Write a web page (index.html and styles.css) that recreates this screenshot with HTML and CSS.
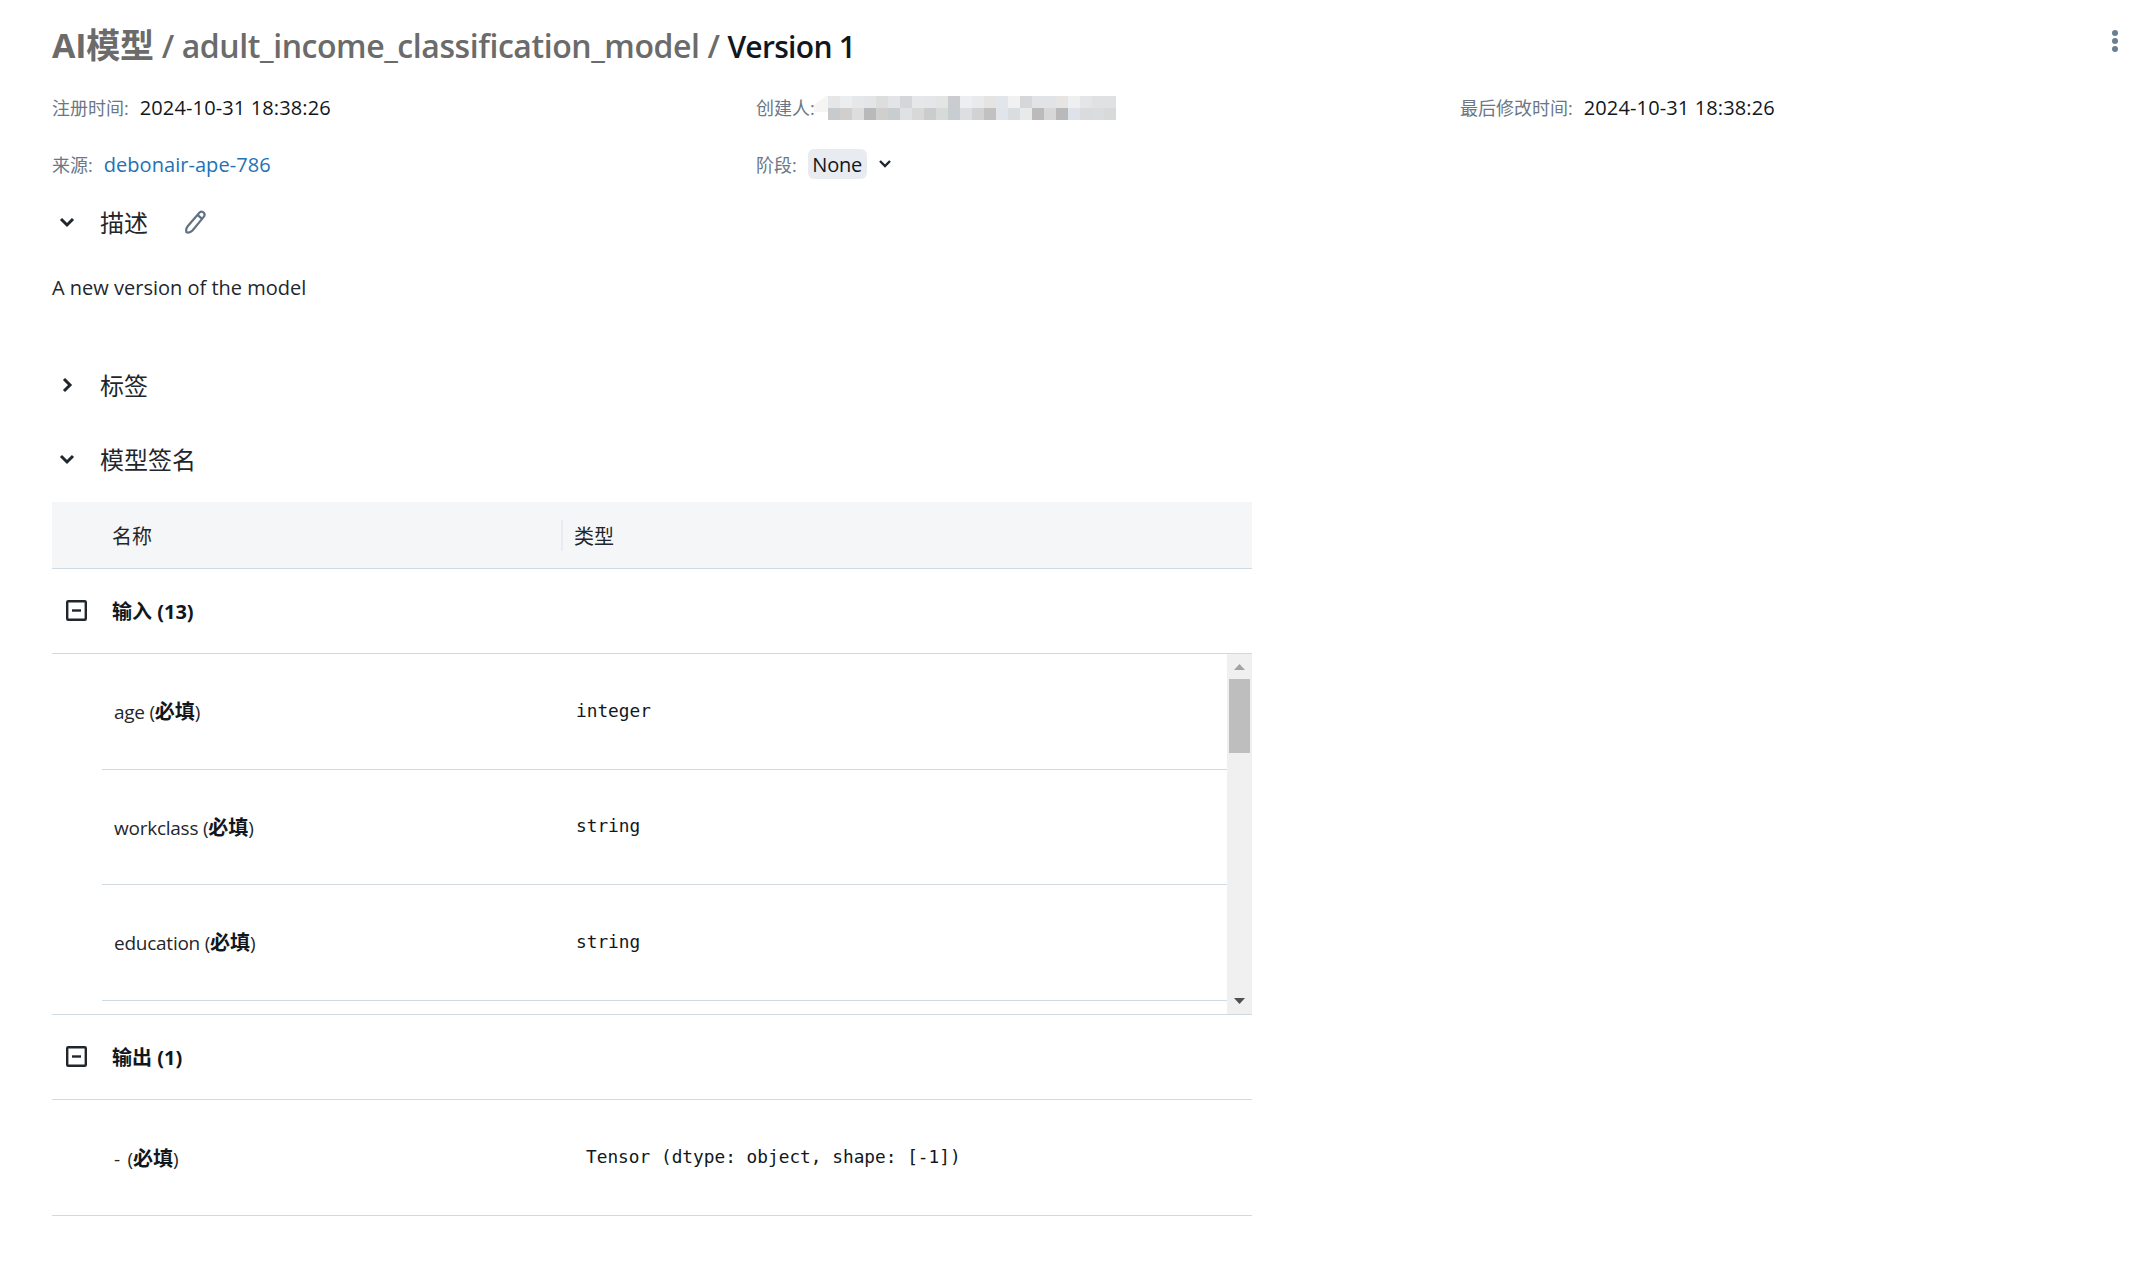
FILE: index.html
```html
<!DOCTYPE html>
<html lang="zh">
<head>
<meta charset="utf-8">
<title>Version 1</title>
<link rel="stylesheet" href="styles.css">
</head>
<body>
<main class="page">
  <header class="title-row">
    <h1 class="title"><span class="crumb crumb-root">AI模型</span><span class="crumb"> / adult_income_classification_model / </span><span class="current">Version 1</span></h1>
    <svg class="kebab" width="8" height="24" viewBox="0 0 8 24"><circle cx="4" cy="4" r="3"/><circle cx="4" cy="12" r="3"/><circle cx="4" cy="20" r="3"/></svg>
  </header>

  <section class="meta">
    <div class="meta-item"><span class="meta-label">注册时间:</span><span class="meta-value">2024-10-31 18:38:26</span></div>
    <div class="meta-item"><span class="meta-label">创建人:</span>
      <svg class="redacted" width="302" height="24" viewBox="0 0 302 24">
        <polygon points="0,16 0,9 12,0 14,0 14,16" fill="#f5f5f4"/>
        <g>
          <rect x="14" y="0" width="12" height="12" fill="#e4e6e8"/><rect x="26" y="0" width="12" height="12" fill="#ecedee"/><rect x="38" y="0" width="12" height="12" fill="#e6e7e8"/><rect x="50" y="0" width="12" height="12" fill="#e4e5e6"/><rect x="62" y="0" width="12" height="12" fill="#dcdddd"/><rect x="74" y="0" width="12" height="12" fill="#e3e4e6"/><rect x="86" y="0" width="12" height="12" fill="#d4d6da"/><rect x="98" y="0" width="12" height="12" fill="#e6e7e8"/><rect x="110" y="0" width="12" height="12" fill="#e5e6e7"/><rect x="122" y="0" width="12" height="12" fill="#e3e4e4"/><rect x="134" y="0" width="12" height="12" fill="#caccd0"/><rect x="146" y="0" width="12" height="12" fill="#eceef0"/><rect x="158" y="0" width="12" height="12" fill="#e9eaeb"/><rect x="170" y="0" width="12" height="12" fill="#e6e4e2"/><rect x="182" y="0" width="12" height="12" fill="#e2e6ea"/><rect x="194" y="0" width="12" height="12" fill="#f0f1f0"/><rect x="206" y="0" width="12" height="12" fill="#d6d7d8"/><rect x="218" y="0" width="12" height="12" fill="#e2e3e6"/><rect x="230" y="0" width="12" height="12" fill="#e1e3e6"/><rect x="242" y="0" width="12" height="12" fill="#e6e5e3"/><rect x="254" y="0" width="12" height="12" fill="#edeff1"/><rect x="266" y="0" width="12" height="12" fill="#e4e5e7"/><rect x="278" y="0" width="12" height="12" fill="#e0e1e3"/><rect x="290" y="0" width="12" height="12" fill="#dfe1e3"/>
          <rect x="14" y="12" width="12" height="12" fill="#c8cbce"/><rect x="26" y="12" width="12" height="12" fill="#d0cfcd"/><rect x="38" y="12" width="12" height="12" fill="#dcdddc"/><rect x="50" y="12" width="12" height="12" fill="#b8b9bb"/><rect x="62" y="12" width="12" height="12" fill="#d0cfce"/><rect x="74" y="12" width="12" height="12" fill="#c8cdd0"/><rect x="86" y="12" width="12" height="12" fill="#dfe1e5"/><rect x="98" y="12" width="12" height="12" fill="#d8d8d7"/><rect x="110" y="12" width="12" height="12" fill="#cbcccd"/><rect x="122" y="12" width="12" height="12" fill="#d8d9d9"/><rect x="134" y="12" width="12" height="12" fill="#c8cdd2"/><rect x="146" y="12" width="12" height="12" fill="#dcdee2"/><rect x="158" y="12" width="12" height="12" fill="#d2d1d3"/><rect x="170" y="12" width="12" height="12" fill="#c2c0c0"/><rect x="182" y="12" width="12" height="12" fill="#dfe5ea"/><rect x="194" y="12" width="12" height="12" fill="#dadde0"/><rect x="206" y="12" width="12" height="12" fill="#e8e9e9"/><rect x="218" y="12" width="12" height="12" fill="#bcbabb"/><rect x="230" y="12" width="12" height="12" fill="#d6d7d6"/><rect x="242" y="12" width="12" height="12" fill="#bab9ba"/><rect x="254" y="12" width="12" height="12" fill="#dde3e8"/><rect x="266" y="12" width="12" height="12" fill="#d9dbdd"/><rect x="278" y="12" width="12" height="12" fill="#dbdcdd"/><rect x="290" y="12" width="12" height="12" fill="#d8dada"/>
        </g>
      </svg>
    </div>
    <div class="meta-item"><span class="meta-label">最后修改时间:</span><span class="meta-value">2024-10-31 18:38:26</span></div>
    <div class="meta-item"><span class="meta-label">来源:</span><a class="link" href="#">debonair-ape-786</a></div>
    <div class="meta-item"><span class="meta-label">阶段:</span><span class="chip">None</span>
      <svg class="stage-caret" width="14" height="10" viewBox="0 0 14 10"><path d="M2 2l5 5 5-5"/></svg>
    </div>
  </section>

  <div class="section-head sec-desc">
    <svg class="caret" width="16" height="16" viewBox="0 0 16 16"><path d="M2 5l6 6 6-6"/></svg>
    <h2 class="section-title">描述</h2>
    <svg class="pencil" width="24" height="24" viewBox="0 0 24 24"><path d="M16.500 2.500c1.500-1.200 3.300-.8 4.300.3 1 1.200 1 2.800-.1 4.100L9.500 20.500c-1.600 1.600-4.500 2.300-6 1.800-.6-1.800.1-4.700 1.400-6.300zM14.500 4.800l4.600 4"/></svg>
  </div>
  <p class="description">A new version of the model</p>

  <div class="section-head sec-tags">
    <svg class="caret" width="16" height="16" viewBox="0 0 16 16"><path d="M5 2l6 6-6 6"/></svg>
    <h2 class="section-title">标签</h2>
  </div>

  <div class="section-head sec-sign">
    <svg class="caret" width="16" height="16" viewBox="0 0 16 16"><path d="M2 5l6 6 6-6"/></svg>
    <h2 class="section-title">模型签名</h2>
  </div>

  <section class="table">
    <div class="table-head">
      <span class="th-name">名称</span>
      <span class="th-divider"></span>
      <span class="th-type">类型</span>
    </div>

    <div class="group-row">
      <svg class="collapse" width="21" height="21" viewBox="0 0 21 21"><rect x="1.200" y="1.200" width="18.600" height="18.600" rx="1"/><path d="M6 10.500h9"/></svg>
      <span class="group-name">输入 (13)</span>
    </div>

    <div class="scroller">
      <div class="rows">
        <div class="row"><span class="cell-name">age <span class="paren">(<b>必填</b>)</span></span><code class="cell-type">integer</code></div>
        <div class="row"><span class="cell-name">workclass <span class="paren">(<b>必填</b>)</span></span><code class="cell-type">string</code></div>
        <div class="row"><span class="cell-name">education <span class="paren">(<b>必填</b>)</span></span><code class="cell-type">string</code></div>
      </div>
      <div class="scrollbar">
        <svg class="sb-arrow" width="11" height="6" viewBox="0 0 11 6"><path class="sb-up" d="M5.500 0L11 6H0z"/></svg>
        <div class="sb-thumb"></div>
        <svg class="sb-arrow sb-arrow-down" width="11" height="6" viewBox="0 0 11 6"><path class="sb-down" d="M0 0h11L5.500 6z"/></svg>
      </div>
    </div>

    <div class="group-row group-output">
      <svg class="collapse" width="21" height="21" viewBox="0 0 21 21"><rect x="1.200" y="1.200" width="18.600" height="18.600" rx="1"/><path d="M6 10.500h9"/></svg>
      <span class="group-name">输出 (1)</span>
    </div>

    <div class="row row-output"><span class="cell-name">- <span class="paren">(<b>必填</b>)</span></span><code class="cell-type cell-tensor">Tensor (dtype: object, shape: [-1])</code></div>
  </section>
</main>
</body>
</html>
```

FILE: styles.css
```css
* { box-sizing: border-box; }
html, body { margin: 0; padding: 0; background: #fff; }
body {
  font-family: "Open Sans", "Noto Sans CJK SC", sans-serif;
  font-size: 20px;
  color: #11171c;
  letter-spacing: -0.2px;
}
.page { padding: 24px 0 0 52px; width: 2131px; height: 1272px; overflow: hidden; }

.title-row { display: flex; align-items: center; justify-content: space-between; height: 44px; padding-right: 12px; }
.title { margin: 0; font-size: 32px; font-weight: 600; line-height: 44px; letter-spacing: -0.43px; white-space: pre; }
.crumb { color: #6b6b6b; }
.crumb-root { font-size: 34px; font-weight: 700; letter-spacing: -0.2px; }
.current { color: #11171c; font-size: 30px; letter-spacing: -0.7px; }
.kebab { fill: #6b7f92; flex: none; margin-bottom: 10px; }

.meta { display: grid; grid-template-columns: repeat(3, 704px); grid-auto-rows: 42px; row-gap: 15px; margin-top: 18px; }
.meta-item { display: flex; align-items: center; }
.meta-label { color: #6b7785; font-size: 18px; letter-spacing: 0; margin-right: 11px; white-space: nowrap; }
.meta-value { letter-spacing: 0.13px; }
.link { color: #2272b4; text-decoration: none; letter-spacing: 0.05px; }
.redacted { margin-left: -12px; margin-top: 1px; }
.chip { display: flex; align-items: center; justify-content: center; width: 59px; height: 30px; background: #e8ebf0; border-radius: 6px; }
.stage-caret { margin-left: 11px; fill: none; stroke: #1f272d; stroke-width: 2.400; }

.section-head { display: flex; align-items: center; height: 40px; }
.sec-desc { margin-top: 17px; }
.sec-tags { margin-top: 62px; }
.sec-sign { margin-top: 34px; }
.caret { margin-left: 7px; margin-right: 25px; fill: none; stroke: #1f272d; stroke-width: 3; flex: none; }
.section-title { margin: 0 0 2px; font-size: 24px; font-weight: 400; letter-spacing: 0; color: #1f272d; }
.pencil { margin-left: 35px; fill: none; stroke: #5f7283; stroke-width: 2.200; }
.description { margin: 31px 0 0; height: 30px; line-height: 30px; letter-spacing: 0; color: #1f272d; }

.table { width: 1200px; margin-top: 23px; }
.table-head { display: flex; align-items: center; height: 67px; background: #f5f6f8; border-bottom: 1px solid #d1d9e1; padding-left: 60px; }
.th-name { width: 449px; letter-spacing: 0; color: #1f272d; }
.th-divider { width: 2px; height: 31px; background: #e8ebf0; }
.th-type { margin-left: 11px; letter-spacing: 0; color: #1f272d; }

.group-row { display: flex; align-items: center; height: 85px; border-bottom: 1px solid #d1d9e1; padding-left: 14px; }
.collapse { fill: none; stroke: #1f272d; stroke-width: 2.400; margin-right: 25px; margin-bottom: 2px; flex: none; }
.group-name { font-weight: 700; letter-spacing: 0; font-size: 20px; margin-bottom: 1px; }

.scroller { display: flex; height: 361px; border-bottom: 1px solid #d1d9e1; overflow: hidden; }
.rows { width: 1175px; padding-left: 50px; }
.row { display: flex; align-items: center; height: 115.500px; border-bottom: 1px solid #d1d9e1; padding-left: 12px; color: #1f272d; }
.cell-name { width: 462px; font-size: 19px; letter-spacing: -0.25px; margin-bottom: 1px; }
.paren b { font-weight: 700; color: #11171c; font-size: 20px; letter-spacing: 0; }
.cell-type { font-family: "DejaVu Sans Mono", "Liberation Mono", monospace; font-size: 17.800px; letter-spacing: 0; color: #11171c; margin-bottom: 2px; }

.scrollbar { width: 25px; height: 361px; background: #f0f0f0; display: flex; flex-direction: column; align-items: center; padding-top: 10px; }
.sb-arrow { flex: none; }
.sb-up { fill: #a3a3a3; }
.sb-down { fill: #505050; }
.sb-thumb { width: 21px; height: 74px; margin-top: 9px; background: #bebebe; flex: none; }
.sb-arrow-down { margin-top: 245px; }

.row-output { height: 116px; padding-left: 62px; }
.row-output .cell-name { width: 472px; }
.row-output .paren { margin-left: 3px; }
```
